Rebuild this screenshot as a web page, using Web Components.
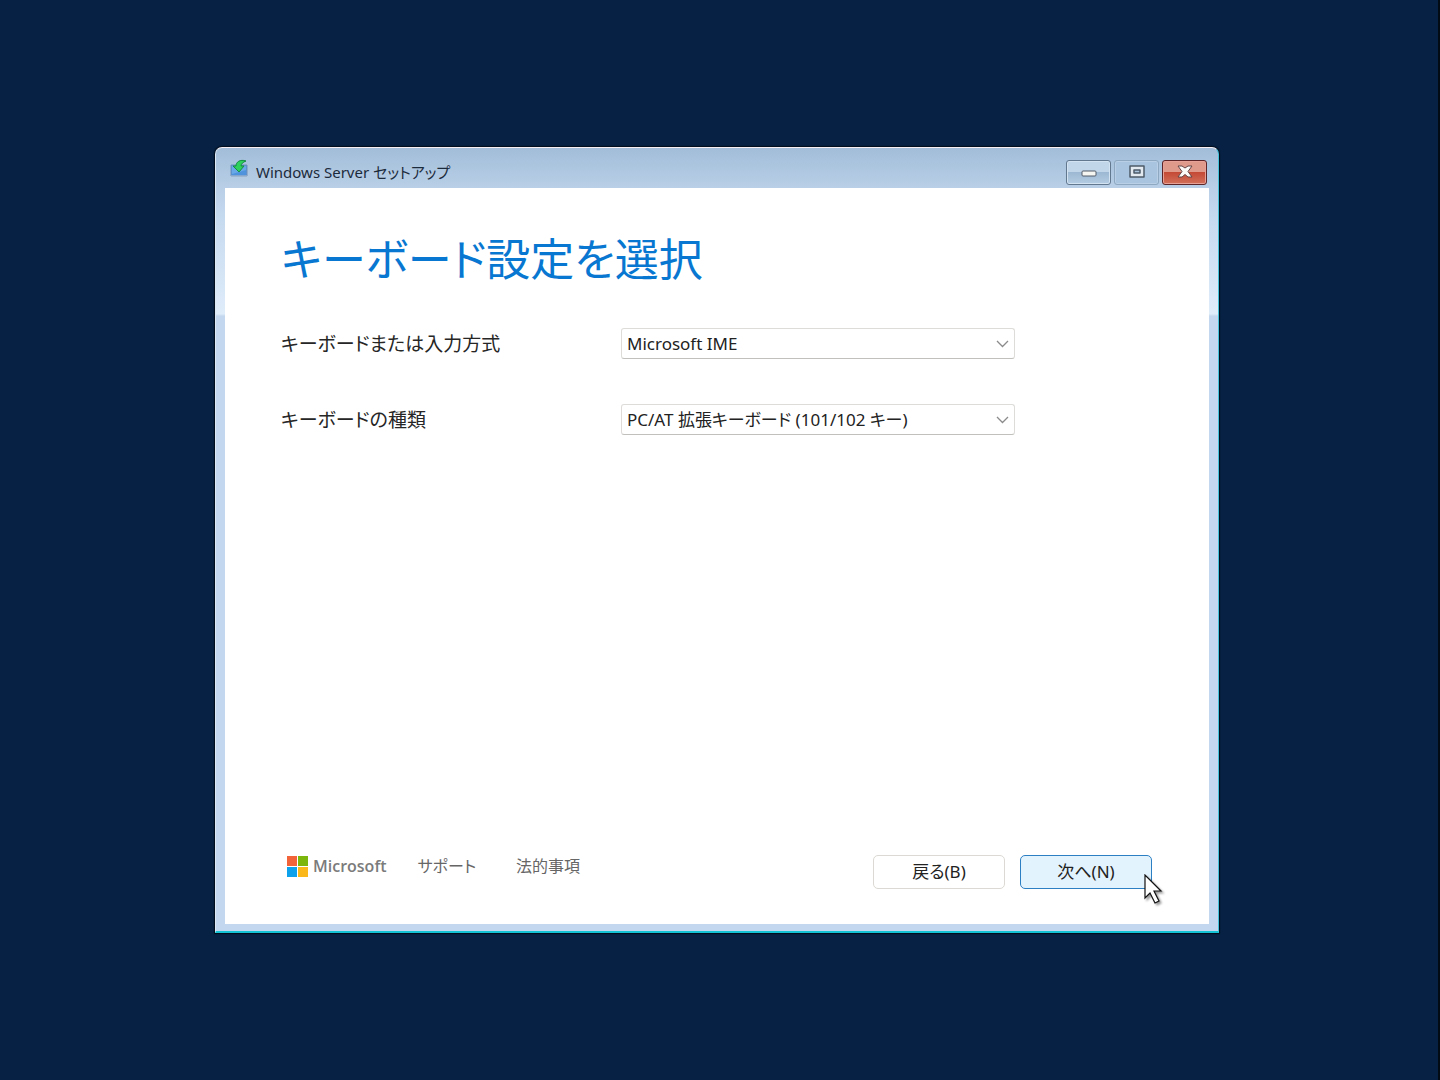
<!DOCTYPE html>
<html lang="ja">
<head>
<meta charset="utf-8">
<title>Windows Server セットアップ</title>
<style>
  html, body { margin: 0; min-height: 100vh; background: #062143; }
  body { font-family: "Noto Sans", "Noto Sans CJK JP", sans-serif; font-feature-settings: "palt"; color: #1b1b1b; }
</style>
</head>
<body>
<setup-desktop>
  <aero-window caption="Windows Server セットアップ">
    <setup-page heading="キーボード設定を選択">
      <select-field label="キーボードまたは入力方式" options="Microsoft IME"></select-field>
      <select-field label="キーボードの種類" options="PC/AT 拡張キーボード (101/102 キー)"></select-field>
      <setup-footer slot="footer">
        <ms-logo slot="start"></ms-logo>
        <footer-link slot="start">サポート</footer-link>
        <footer-link slot="start">法的事項</footer-link>
        <push-button slot="end">戻る(B)</push-button>
        <push-button slot="end" hot>次へ(N)<mouse-pointer slot="pointer"></mouse-pointer></push-button>
      </setup-footer>
    </setup-page>
  </aero-window>
</setup-desktop>
<script>
const define = (name, html, setup) => {
  const tpl = document.createElement('template');
  tpl.innerHTML = html;
  customElements.define(name, class extends HTMLElement {
    constructor() {
      super();
      this.attachShadow({ mode: 'open' }).append(tpl.content.cloneNode(true));
    }
    connectedCallback() { if (setup) setup(this, this.shadowRoot); }
  });
};

define('setup-desktop', `
<style>
  :host { display: grid; box-sizing: border-box; min-height: 100vh; padding: 147px 219px 147px 215px;
    background: #062143; border-right: 2px solid #020a14; }
</style>
<slot></slot>`);

define('aero-window', `
<style>
  :host { display: flex; flex-direction: column; box-sizing: border-box; min-width: 0;
    border: 1px solid #dce8f4; border-top-color: #f6eef2; border-right-color: #45c3da; border-bottom: 2px solid #14c4d6;
    border-radius: 7px 7px 0 0; padding: 0 9px 7px 9px;
    box-shadow: 0 0 1px 1px #020d1c;
    background:
      linear-gradient(#a2bdd9 0, #b9cfe7 40px, #c6daef 70px, #dfecfa 166px, #c3d8ee 168px); }
  header { display: flex; align-items: center; height: 40px; gap: 8px; padding: 0 2px 0 5px; }
  .icon { width: 18px; height: 20px; margin-top: 2px; }
  h1 { flex: 1; margin: 8px 0 0; font-size: 15px; line-height: 24px; font-weight: 400; color: #1c2b3c; }
  nav { display: flex; gap: 3px; margin-top: 8px; }
  button { width: 45px; height: 25px; padding: 0; border: 1px solid #62788f; border-radius: 3px;
    display: grid; place-items: center; box-shadow: inset 0 0 0 1px #d3e3f2;
    background: linear-gradient(#c2d6e9 0 48%, #9db8d2 50%, #b4cde4); }
  button.off { border-color: #8ea8c2; background: #a9c4de; box-shadow: inset 0 0 0 1px #b8cfe5; }
  button.close { border-color: #5c2527; box-shadow: inset 0 0 0 1px #e8a196;
    background: linear-gradient(#e09a8b 0 46%, #c44a36 50%, #d2705a); }
  main { flex: 1; display: grid; background: #fff; }
</style>
<header>
  <svg class="icon" viewBox="0 0 18 20" aria-hidden="true">
    <path d="M1 6h16v11H1z" fill="#4f93dd" stroke="#6f8fb8"/>
    <path d="M2 7h14v4L2 15z" fill="#6aa9e8"/>
    <path d="M1 17h16" stroke="#a9bdd2"/>
    <path d="M16 2C10 0 6 3 6 7H3l6 6 5-6h-3c0-2 2-4 5-5z" fill="#2ed15b" stroke="#168b43"/>
  </svg>
  <h1></h1>
  <nav>
    <button type="button" aria-label="最小化"><svg width="16" height="16" viewBox="0 0 16 16"><rect x="1" y="7" width="14" height="5" rx="1" fill="#f5f5f2" stroke="#535d68"/></svg></button>
    <button type="button" class="off" aria-label="最大化"><svg width="16" height="16" viewBox="0 0 16 16"><path fill-rule="evenodd" d="M1 2h14v11H1zM5 6v3h6V6z" fill="#e2e9ef" stroke="#4e5b69" stroke-width="1.500" stroke-linejoin="round"/></svg></button>
    <button type="button" class="close" aria-label="閉じる"><svg width="16" height="16" viewBox="0 0 16 16"><path d="M1 2h4l3 2 3-2h4l-4 5.500 4 5.500h-4l-3-2.500L5 13H1l4-5.500z" fill="#fbfaf9" stroke="#644344" stroke-linejoin="round"/></svg></button>
  </nav>
</header>
<main><slot></slot></main>`, (el, root) => {
  root.querySelector('h1').textContent = el.getAttribute('caption');
});

define('setup-page', `
<style>
  :host { display: flex; flex-direction: column; padding: 40px 57px 35px 56px; }
  h2 { margin: 0 0 38px; font-size: 44px; line-height: 62px; font-weight: 400; color: #0877d1; }
  form { display: flex; flex-direction: column; gap: 45px; flex: 1; }
</style>
<h2></h2>
<form><slot></slot></form>
<slot name="footer"></slot>`, (el, root) => {
  root.querySelector('h2').textContent = el.getAttribute('heading');
});

define('select-field', `
<style>
  :host { display: grid; grid-template-columns: 340px minmax(0, 394px); align-items: center; }
  label { font-size: 19px; line-height: 28px; color: #262626; }
  .box { display: grid; align-items: center; }
  select { grid-area: 1 / 1; appearance: none; box-sizing: border-box; width: 100%; height: 31px; margin: 0;
    padding: 0 30px 0 5px; border: 1px solid #dedcd9; border-bottom-color: #c2c0bc; border-radius: 3px; background: #fff;
    font: inherit; font-size: 17px; font-feature-settings: inherit; color: #222; }
  svg { grid-area: 1 / 1; justify-self: end; margin-right: 6px; pointer-events: none; }
</style>
<label for="field"></label>
<div class="box">
  <select id="field"></select>
  <svg width="13" height="8" viewBox="0 0 13 8" aria-hidden="true"><path d="M1 1l5.500 5.500L12 1" fill="none" stroke="#8b8b8b" stroke-width="1.300"/></svg>
</div>`, (el, root) => {
  root.querySelector('label').textContent = el.getAttribute('label');
  root.querySelector('select').replaceChildren(...el.getAttribute('options').split('|').map(t => new Option(t)));
});

define('setup-footer', `
<style>
  :host { display: flex; align-items: flex-start; justify-content: space-between; }
  .start { display: flex; gap: 31px; padding-left: 6px; }
  .end { display: flex; gap: 15px; }
</style>
<div class="start"><slot name="start"></slot></div>
<div class="end"><slot name="end"></slot></div>`);

define('ms-logo', `
<style>
  :host { display: flex; align-items: center; gap: 5px; height: 22px; font: 600 16px/22px "Open Sans", sans-serif; color: #7b7b7b; }
</style>
<svg width="21" height="21" viewBox="0 0 21 21" aria-hidden="true">
  <path d="M0 0h10v10H0z" fill="#f2633a"/><path d="M11 0h10v10H11z" fill="#7cb50c"/>
  <path d="M0 11h10v10H0z" fill="#0ca1ea"/><path d="M11 11h10v10H11z" fill="#fbb81a"/>
</svg>
<span>Microsoft</span>`);

define('footer-link', `
<style>
  :host { display: block; margin-right: 9px; }
  a { display: block; font-size: 16px; line-height: 22px; color: #666; text-decoration: none; }
</style>
<a href="#"><slot></slot></a>`);

define('push-button', `
<style>
  :host { display: block; position: relative; }
  button { box-sizing: border-box; width: 132px; height: 34px; padding: 0; border: 1px solid #dcd9d4; border-radius: 5px;
    background: #fff; font: inherit; font-size: 17px; line-height: 24px; font-feature-settings: inherit; color: #222; }
  :host([hot]) button { border-color: #2d7fc4; background: #e3f3fd; }
</style>
<button type="button"><slot></slot></button>
<slot name="pointer"></slot>`);

define('mouse-pointer', `
<style>
  :host { position: absolute; left: 124px; top: 19px; pointer-events: none; }
  svg { display: block; filter: drop-shadow(2px 2px 1px #0006); }
</style>
<svg width="20" height="32" viewBox="0 0 20 32" aria-hidden="true">
  <path d="M1 1v23l5-5 5 10 4-2-5-10h7z" fill="#fff" stroke="#111" stroke-width="1.200"/>
</svg>`);
</script>
</body>
</html>
